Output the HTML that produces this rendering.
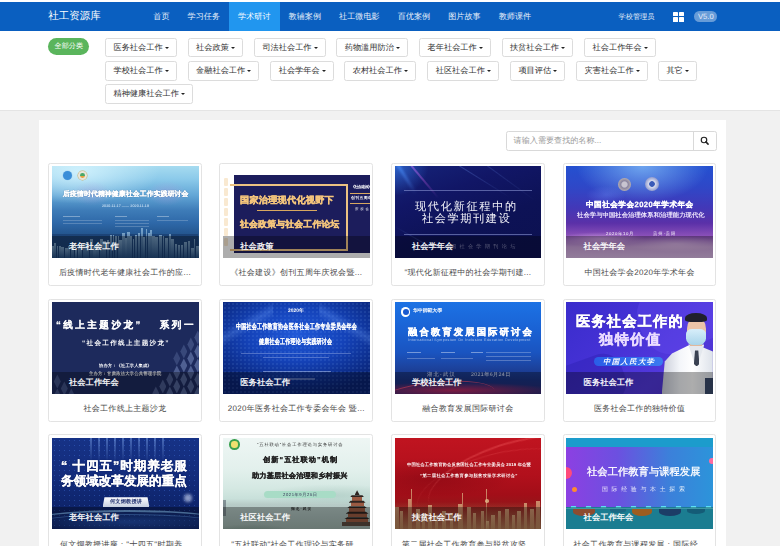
<!DOCTYPE html>
<html><head><meta charset="utf-8"><style>
*{margin:0;padding:0;box-sizing:border-box}
html,body{width:780px;height:546px;overflow:hidden;background:#f1f1f1;font-family:"Liberation Sans",sans-serif;position:relative;text-rendering:geometricPrecision}
.abs{position:absolute}
#top{position:absolute;left:0;top:0;width:780px;height:111px;background:#fff}
#nav{position:absolute;left:0;top:2px;width:780px;height:29px;background:#0a5fc0}
.brand{position:absolute;left:48.3px;top:0;height:29px;line-height:29px;font-size:10.5px;color:#fff;white-space:nowrap}
.ni{position:absolute;top:0;height:29px;line-height:29.8px;font-size:8.1px;color:#e8f0fa;white-space:nowrap;text-align:center}
.ni.act{background:#2196ef;color:#fff}
.pill{position:absolute;left:48.2px;top:37.6px;width:41.2px;height:17.6px;border-radius:9px;background:#5ab55c;color:#fff;font-size:7.1px;line-height:17.6px;text-align:center}
.fb{position:absolute;height:19.5px;border:1px solid #dcdcdc;border-radius:2.4px;background:#fff;color:#333;font-size:8.2px;line-height:18.2px;padding-left:7.4px;white-space:nowrap}
.car{display:inline-block;width:0;height:0;border-left:2.5px solid transparent;border-right:2.5px solid transparent;border-top:2.5px solid #222;vertical-align:middle;margin-left:2.1px;position:relative;top:0}
#line{position:absolute;left:0;top:110.4px;width:780px;height:1px;background:#e4e4e4}
#panel{position:absolute;left:39.2px;top:119.5px;width:686.6px;height:430px;background:#fff}
.search{position:absolute;left:505.8px;top:131px;width:210.8px;height:20.2px;border:1px solid #d9d9d9;border-radius:2.4px;background:#fff}
.search .ph{position:absolute;left:6.8px;top:0;line-height:18.4px;font-size:8.1px;color:#999;white-space:nowrap}
.search .sb{position:absolute;left:186.7px;top:0;width:23.1px;height:18.2px;border-left:1px solid #d9d9d9}
.card{position:absolute;width:153.9px;height:123.6px;border:1px solid #e3e3e3;border-radius:2.4px;background:#fff}
.img{position:absolute;left:2.8px;top:2.8px;width:146.8px;height:91.7px;overflow:hidden}
.cap{position:absolute;left:0;top:101.6px;width:151.9px;height:16px;line-height:16px;text-align:center;font-size:8px;letter-spacing:.3px;color:#4a4a4a;white-space:nowrap}
.ov{position:absolute;left:0;bottom:0;width:100%;height:22.5px;background:rgba(0,0,0,.32)}
.lab{position:absolute;left:17.2px;bottom:.7px;height:22.5px;line-height:22.5px;font-size:8.3px;color:#fff;white-space:nowrap;-webkit-text-stroke:.25px #fff}
</style></head>
<body>
<div id="top"></div>
<div id="nav">
<div class="brand">社工资源库</div>
<div class="ni" style="left:144.25px;width:34.30px">首页</div>
<div class="ni" style="left:178.55px;width:50.50px">学习任务</div>
<div class="ni act" style="left:229.05px;width:50.50px">学术研讨</div>
<div class="ni" style="left:279.55px;width:50.50px">教辅案例</div>
<div class="ni" style="left:330.05px;width:58.60px">社工微电影</div>
<div class="ni" style="left:388.65px;width:50.50px">百优案例</div>
<div class="ni" style="left:439.15px;width:50.50px">图片故事</div>
<div class="ni" style="left:489.65px;width:50.50px">教师课件</div>
<div class="ni" style="left:618.5px;font-size:7.2px">学校管理员</div>
<div class="abs" style="left:673px;top:9.7px;width:10.6px;height:10.2px"><div class="abs" style="left:0;top:0;width:4.8px;height:4.6px;background:#fff;border-radius:.6px"></div><div class="abs" style="left:5.8px;top:0;width:4.8px;height:4.6px;background:#fff;border-radius:.6px"></div><div class="abs" style="left:0;top:5.6px;width:4.8px;height:4.6px;background:#fff;border-radius:.6px"></div><div class="abs" style="left:5.8px;top:5.6px;width:4.8px;height:4.6px;background:#fff;border-radius:.6px"></div></div>
<div class="abs" style="left:694.3px;top:9px;width:23px;height:10.5px;border-radius:5.3px;background:rgba(255,255,255,.38);color:#e8eef8;font-size:7.6px;line-height:11.5px;text-align:center">V5.0</div>
</div>
<div class="pill">全部分类</div>
<div class="fb" style="left:105.1px;top:37.7px;width:71.5px">医务社会工作<span class="car"></span></div>
<div class="fb" style="left:187.7px;top:37.7px;width:55.3px">社会政策<span class="car"></span></div>
<div class="fb" style="left:254px;top:37.7px;width:71.5px">司法社会工作<span class="car"></span></div>
<div class="fb" style="left:336.3px;top:37.7px;width:71.5px">药物滥用防治<span class="car"></span></div>
<div class="fb" style="left:419.2px;top:37.7px;width:71.5px">老年社会工作<span class="car"></span></div>
<div class="fb" style="left:501.5px;top:37.7px;width:71.5px">扶贫社会工作<span class="car"></span></div>
<div class="fb" style="left:584.2px;top:37.7px;width:71.5px">社会工作年会<span class="car"></span></div>
<div class="fb" style="left:105.1px;top:61.3px;width:71.5px">学校社会工作<span class="car"></span></div>
<div class="fb" style="left:187.7px;top:61.3px;width:71.5px">金融社会工作<span class="car"></span></div>
<div class="fb" style="left:270.3px;top:61.3px;width:63.4px">社会学年会<span class="car"></span></div>
<div class="fb" style="left:344.3px;top:61.3px;width:71.5px">农村社会工作<span class="car"></span></div>
<div class="fb" style="left:427.3px;top:61.3px;width:71.5px">社区社会工作<span class="car"></span></div>
<div class="fb" style="left:510px;top:61.3px;width:55.3px">项目评估<span class="car"></span></div>
<div class="fb" style="left:576.2px;top:61.3px;width:71.5px">灾害社会工作<span class="car"></span></div>
<div class="fb" style="left:658px;top:61.3px;width:39.1px">其它<span class="car"></span></div>
<div class="fb" style="left:105.1px;top:84.4px;width:87.7px">精神健康社会工作<span class="car"></span></div>
<div id="line"></div>
<div id="panel"></div>
<div class="search"><div class="ph">请输入需要查找的名称...</div><div class="sb"><svg class="abs" style="left:3.9px;top:2.4px" width="12" height="12" viewBox="0 0 12 12"><circle cx="6" cy="6" r="2.75" fill="none" stroke="#222" stroke-width="1.15"></circle><line x1="7.9" y1="7.9" x2="10.1" y2="10.1" stroke="#222" stroke-width="1.5" stroke-linecap="round"></line></svg></div></div>
<div class="card" style="left:48.0px;top:162.7px"><div class="img" style="background:linear-gradient(#a8d8f0,#2a5a98 60%,#16406e)"><div class="abs" style="left:0.0px;top:0.0px;width:147.0px;height:92.0px;background:radial-gradient(ellipse 55% 35% at 18% 6%, rgba(215,245,255,.85), rgba(215,245,255,0) 100%), linear-gradient(180deg,#a6dbf0 0%,#8ccaea 14%,#62a6d6 32%,#3e7cb8 48%,#2e68a8 62%,#24568f 74%,#1a3f70 100%);"></div><div class="abs" style="left:95.0px;top:15.0px;width:40.0px;height:25.0px;background:radial-gradient(ellipse at center, rgba(180,150,220,.35), rgba(180,150,220,0) 70%);"></div><div class="abs" style="left:20.0px;top:15.0px;width:40.0px;height:25.0px;background:radial-gradient(ellipse at center, rgba(180,150,220,.3), rgba(180,150,220,0) 70%);"></div><div class="abs" style="left:11.4px;top:4.4px;width:9.2px;height:9.2px;border-radius:50%;background:#3a8ed8;box-shadow:0 0 0 .5px #a8d4f0"></div><div class="abs" style="left:26.4px;top:4.4px;width:9.2px;height:9.2px;border-radius:50%;background:#e8e6dc;box-shadow:0 0 0 .5px #c8b070"></div><div class="abs" style="left:28.6px;top:6.9px;width:4.8px;height:4.8px;border-radius:50%;background:linear-gradient(#4aa868 50%,#e8a040 50%);"></div><div class="abs" style="left: 11px; top: 23.7px; width: 502px; height: 30.4px; font-size: 27.6px; line-height: 30.4px; color: rgb(255, 255, 255); font-weight: bold; white-space: nowrap; transform: scale(0.25, 0.25); transform-origin: 0px 0px; -webkit-text-stroke: 1px rgb(255, 255, 255); text-shadow: rgba(10, 42, 90, 0.9) 0px 0px 4px; letter-spacing: 0.31px;">后疫情时代精神健康社会工作实践研讨会</div><div class="abs" style="left: 50px; top: 37.02px; width: 188px; height: 15.8px; font-size: 14.4px; line-height: 15.8px; color: rgb(232, 244, 255); white-space: nowrap; transform: scale(0.25, 0.25); transform-origin: 0px 0px; letter-spacing: 0.4px;">2020.11.17 —— 2020.11.19</div><div class="abs" style="left:11.0px;top:49.2px;width:17.0px;height:1.2px;background:rgba(255,255,255,.35);"></div><div class="abs" style="left:11.0px;top:53.5px;width:39.0px;height:1.0px;background:rgba(255,255,255,.2);"></div><div class="abs" style="left:11.0px;top:56.5px;width:39.0px;height:1.0px;background:rgba(255,255,255,.2);"></div><div class="abs" style="left:63.0px;top:49.2px;width:12.0px;height:1.2px;background:rgba(255,255,255,.35);"></div><div class="abs" style="left:63.0px;top:53.5px;width:34.0px;height:1.0px;background:rgba(255,255,255,.2);"></div><div class="abs" style="left:63.0px;top:56.5px;width:34.0px;height:1.0px;background:rgba(255,255,255,.2);"></div><div class="abs" style="left:63.0px;top:59.5px;width:34.0px;height:1.0px;background:rgba(255,255,255,.2);"></div><div class="abs" style="left:105.0px;top:49.2px;width:12.0px;height:1.2px;background:rgba(255,255,255,.35);"></div><div class="abs" style="left:105.0px;top:53.5px;width:31.0px;height:1.0px;background:rgba(255,255,255,.2);"></div><div class="abs" style="left:0.0px;top:68.0px;width:146.5px;height:23.5px;background:linear-gradient(180deg,#1c4478,#1a3d6e);"></div><div class="abs" style="left:0.0px;top:79.6px;width:2.0px;height:11.9px;background:linear-gradient(180deg,rgba(200,235,255,.5),rgba(100,170,220,.12));"></div><div class="abs" style="left:2.0px;top:76.3px;width:2.5px;height:15.2px;background:linear-gradient(180deg,rgba(200,235,255,.5),rgba(100,170,220,.12));"></div><div class="abs" style="left:5.0px;top:79.4px;width:1.5px;height:12.1px;background:linear-gradient(180deg,rgba(200,235,255,.5),rgba(100,170,220,.12));"></div><div class="abs" style="left:7.0px;top:80.0px;width:2.5px;height:11.5px;background:linear-gradient(180deg,rgba(200,235,255,.5),rgba(100,170,220,.12));"></div><div class="abs" style="left:9.5px;top:80.1px;width:3.0px;height:11.4px;background:linear-gradient(180deg,rgba(200,235,255,.5),rgba(100,170,220,.12));"></div><div class="abs" style="left:13.5px;top:81.5px;width:3.0px;height:10.0px;background:linear-gradient(180deg,rgba(200,235,255,.5),rgba(100,170,220,.12));"></div><div class="abs" style="left:16.5px;top:79.2px;width:2.0px;height:12.3px;background:linear-gradient(180deg,rgba(200,235,255,.5),rgba(100,170,220,.12));"></div><div class="abs" style="left:19.5px;top:78.1px;width:3.0px;height:13.4px;background:linear-gradient(180deg,rgba(200,235,255,.5),rgba(100,170,220,.12));"></div><div class="abs" style="left:23.5px;top:83.2px;width:1.5px;height:8.3px;background:linear-gradient(180deg,rgba(200,235,255,.5),rgba(100,170,220,.12));"></div><div class="abs" style="left:26.0px;top:81.3px;width:1.5px;height:10.2px;background:linear-gradient(180deg,rgba(200,235,255,.5),rgba(100,170,220,.12));"></div><div class="abs" style="left:27.5px;top:79.3px;width:2.5px;height:12.2px;background:linear-gradient(180deg,rgba(200,235,255,.5),rgba(100,170,220,.12));"></div><div class="abs" style="left:31.0px;top:76.2px;width:3.0px;height:15.3px;background:linear-gradient(180deg,rgba(200,235,255,.5),rgba(100,170,220,.12));"></div><div class="abs" style="left:34.5px;top:75.3px;width:3.0px;height:16.2px;background:linear-gradient(180deg,rgba(200,235,255,.5),rgba(100,170,220,.12));"></div><div class="abs" style="left:38.5px;top:72.2px;width:3.0px;height:19.3px;background:linear-gradient(180deg,rgba(200,235,255,.5),rgba(100,170,220,.12));"></div><div class="abs" style="left:41.5px;top:80.2px;width:2.5px;height:11.3px;background:linear-gradient(180deg,rgba(200,235,255,.5),rgba(100,170,220,.12));"></div><div class="abs" style="left:44.0px;top:78.5px;width:3.0px;height:13.0px;background:linear-gradient(180deg,rgba(200,235,255,.5),rgba(100,170,220,.12));"></div><div class="abs" style="left:48.0px;top:72.1px;width:3.0px;height:19.4px;background:linear-gradient(180deg,rgba(200,235,255,.5),rgba(100,170,220,.12));"></div><div class="abs" style="left:51.5px;top:74.1px;width:3.0px;height:17.4px;background:linear-gradient(180deg,rgba(200,235,255,.5),rgba(100,170,220,.12));"></div><div class="abs" style="left:55.0px;top:73.2px;width:2.5px;height:18.3px;background:linear-gradient(180deg,rgba(200,235,255,.5),rgba(100,170,220,.12));"></div><div class="abs" style="left:58.0px;top:68.9px;width:2.0px;height:22.6px;background:linear-gradient(180deg,rgba(200,235,255,.5),rgba(100,170,220,.12));"></div><div class="abs" style="left:61.0px;top:68.7px;width:1.5px;height:22.8px;background:linear-gradient(180deg,rgba(200,235,255,.5),rgba(100,170,220,.12));"></div><div class="abs" style="left:63.5px;top:69.8px;width:2.0px;height:21.7px;background:linear-gradient(180deg,rgba(200,235,255,.5),rgba(100,170,220,.12));"></div><div class="abs" style="left:66.0px;top:69.2px;width:1.5px;height:22.3px;background:linear-gradient(180deg,rgba(200,235,255,.5),rgba(100,170,220,.12));"></div><div class="abs" style="left:67.5px;top:73.2px;width:2.5px;height:18.3px;background:linear-gradient(180deg,rgba(200,235,255,.5),rgba(100,170,220,.12));"></div><div class="abs" style="left:70.0px;top:67.0px;width:3.0px;height:24.5px;background:linear-gradient(180deg,rgba(200,235,255,.5),rgba(100,170,220,.12));"></div><div class="abs" style="left:73.5px;top:71.4px;width:1.5px;height:20.1px;background:linear-gradient(180deg,rgba(200,235,255,.5),rgba(100,170,220,.12));"></div><div class="abs" style="left:75.0px;top:65.5px;width:3.0px;height:26.0px;background:linear-gradient(180deg,rgba(200,235,255,.5),rgba(100,170,220,.12));"></div><div class="abs" style="left:78.0px;top:69.6px;width:2.5px;height:21.9px;background:linear-gradient(180deg,rgba(200,235,255,.5),rgba(100,170,220,.12));"></div><div class="abs" style="left:81.0px;top:72.9px;width:1.5px;height:18.6px;background:linear-gradient(180deg,rgba(200,235,255,.5),rgba(100,170,220,.12));"></div><div class="abs" style="left:83.5px;top:69.0px;width:1.5px;height:22.5px;background:linear-gradient(180deg,rgba(200,235,255,.5),rgba(100,170,220,.12));"></div><div class="abs" style="left:86.0px;top:66.8px;width:2.5px;height:24.7px;background:linear-gradient(180deg,rgba(200,235,255,.5),rgba(100,170,220,.12));"></div><div class="abs" style="left:89.0px;top:61.7px;width:2.0px;height:29.8px;background:linear-gradient(180deg,rgba(200,235,255,.5),rgba(100,170,220,.12));"></div><div class="abs" style="left:91.5px;top:71.0px;width:1.5px;height:20.5px;background:linear-gradient(180deg,rgba(200,235,255,.5),rgba(100,170,220,.12));"></div><div class="abs" style="left:94.0px;top:62.8px;width:1.5px;height:28.7px;background:linear-gradient(180deg,rgba(200,235,255,.5),rgba(100,170,220,.12));"></div><div class="abs" style="left:96.0px;top:66.6px;width:2.5px;height:24.9px;background:linear-gradient(180deg,rgba(200,235,255,.5),rgba(100,170,220,.12));"></div><div class="abs" style="left:98.5px;top:63.4px;width:1.5px;height:28.1px;background:linear-gradient(180deg,rgba(200,235,255,.5),rgba(100,170,220,.12));"></div><div class="abs" style="left:100.5px;top:70.0px;width:2.5px;height:21.5px;background:linear-gradient(180deg,rgba(200,235,255,.5),rgba(100,170,220,.12));"></div><div class="abs" style="left:103.0px;top:70.3px;width:3.0px;height:21.2px;background:linear-gradient(180deg,rgba(200,235,255,.5),rgba(100,170,220,.12));"></div><div class="abs" style="left:107.0px;top:68.5px;width:3.0px;height:23.0px;background:linear-gradient(180deg,rgba(200,235,255,.5),rgba(100,170,220,.12));"></div><div class="abs" style="left:111.0px;top:69.5px;width:1.5px;height:22.0px;background:linear-gradient(180deg,rgba(200,235,255,.5),rgba(100,170,220,.12));"></div><div class="abs" style="left:113.5px;top:71.9px;width:2.5px;height:19.6px;background:linear-gradient(180deg,rgba(200,235,255,.5),rgba(100,170,220,.12));"></div><div class="abs" style="left:117.0px;top:67.5px;width:2.0px;height:24.0px;background:linear-gradient(180deg,rgba(200,235,255,.5),rgba(100,170,220,.12));"></div><div class="abs" style="left:119.5px;top:72.2px;width:2.5px;height:19.3px;background:linear-gradient(180deg,rgba(200,235,255,.5),rgba(100,170,220,.12));"></div><div class="abs" style="left:123.0px;top:78.0px;width:2.5px;height:13.5px;background:linear-gradient(180deg,rgba(200,235,255,.5),rgba(100,170,220,.12));"></div><div class="abs" style="left:126.0px;top:78.5px;width:2.5px;height:13.0px;background:linear-gradient(180deg,rgba(200,235,255,.5),rgba(100,170,220,.12));"></div><div class="abs" style="left:129.5px;top:78.8px;width:2.0px;height:12.7px;background:linear-gradient(180deg,rgba(200,235,255,.5),rgba(100,170,220,.12));"></div><div class="abs" style="left:132.5px;top:75.3px;width:2.5px;height:16.2px;background:linear-gradient(180deg,rgba(200,235,255,.5),rgba(100,170,220,.12));"></div><div class="abs" style="left:136.0px;top:74.6px;width:2.5px;height:16.9px;background:linear-gradient(180deg,rgba(200,235,255,.5),rgba(100,170,220,.12));"></div><div class="abs" style="left:139.0px;top:81.1px;width:3.0px;height:10.4px;background:linear-gradient(180deg,rgba(200,235,255,.5),rgba(100,170,220,.12));"></div><div class="abs" style="left:142.0px;top:72.3px;width:1.5px;height:19.2px;background:linear-gradient(180deg,rgba(200,235,255,.5),rgba(100,170,220,.12));"></div><div class="abs" style="left:144.0px;top:79.3px;width:3.0px;height:12.2px;background:linear-gradient(180deg,rgba(200,235,255,.5),rgba(100,170,220,.12));"></div><div class="ov"></div><div class="lab">老年社会工作</div></div><div class="cap">后疫情时代老年健康社会工作的应...</div></div>
<div class="card" style="left:219.3px;top:162.7px"><div class="img" style="background:#fff"><div class="abs" style="left:10.8px;top:8.1px;width:136.0px;height:80.5px;background:#1c1d5c;"></div><div class="abs" style="left:6.5px;top:17.5px;width:118.1px;height:67.5px;background:transparent;border:2.2px solid #ecc282;border-left:none;"></div><div class="abs" style="left:1.0px;top:12.0px;width:4.4px;height:7.5px;background:rgba(240,200,140,.4);border-radius:1px;"></div><div class="abs" style="left:1.0px;top:22.0px;width:4.4px;height:7.5px;background:rgba(240,200,140,.4);border-radius:1px;"></div><div class="abs" style="left:1.0px;top:32.0px;width:4.4px;height:7.5px;background:rgba(240,200,140,.4);border-radius:1px;"></div><div class="abs" style="left:1.0px;top:42.0px;width:4.4px;height:7.5px;background:rgba(240,200,140,.4);border-radius:1px;"></div><div class="abs" style="left:1.0px;top:52.0px;width:4.4px;height:7.5px;background:rgba(240,200,140,.4);border-radius:1px;"></div><div class="abs" style="left:1.0px;top:62.0px;width:4.4px;height:7.5px;background:rgba(240,200,140,.4);border-radius:1px;"></div><div class="abs" style="left:1.0px;top:72.0px;width:4.4px;height:7.5px;background:rgba(240,200,140,.4);border-radius:1px;"></div><div class="abs" style="left: 17.4px; top: 28.6px; width: 374.4px; height: 40px; font-size: 36.4px; line-height: 40px; color: rgb(244, 197, 124); font-weight: bold; white-space: nowrap; transform: scale(0.25, 0.25); transform-origin: 0px 0px; -webkit-text-stroke: 2px rgb(244, 197, 124); letter-spacing: 1.21px;">国家治理现代化视野下</div><div class="abs" style="left:34.0px;top:43.8px;width:60.4px;height:0.8px;background:#d8a860;"></div><div class="abs" style="left: 17.4px; top: 52.16px; width: 397.6px; height: 38.7px; font-size: 35.2px; line-height: 38.7px; color: rgb(244, 197, 124); font-weight: bold; white-space: nowrap; transform: scale(0.25, 0.25); transform-origin: 0px 0px; -webkit-text-stroke: 2px rgb(244, 197, 124); letter-spacing: 1.01px;">社会政策与社会工作论坛</div><div class="abs" style="left: 128px; top: 18.86px; width: 84px; height: 17.2px; font-size: 15.6px; line-height: 17.2px; color: rgb(255, 255, 255); font-weight: bold; white-space: nowrap; transform: scale(0.25, 0.25); transform-origin: 0px 0px; letter-spacing: -1.91px;">《社会建设》</div><div class="abs" style="left:127.0px;top:26.5px;width:19.5px;height:0.7px;background:#d8a860;"></div><div class="abs" style="left: 128px; top: 29.86px; width: 84px; height: 17.2px; font-size: 15.6px; line-height: 17.2px; color: rgb(255, 255, 255); font-weight: bold; white-space: nowrap; transform: scale(0.25, 0.25); transform-origin: 0px 0px; letter-spacing: 1.51px;">创刊五周年</div><div class="abs" style="left:127.0px;top:37.0px;width:19.5px;height:0.7px;background:#d8a860;"></div><div class="abs" style="left: 132px; top: 40.13px; width: 56px; height: 15px; font-size: 13.6px; line-height: 15px; color: rgb(255, 255, 255); white-space: nowrap; transform: scale(0.25, 0.25); transform-origin: 0px 0px; letter-spacing: 7.61px;">庆祝会</div><div class="abs" style="left:0.0px;top:86.5px;width:146.5px;height:5.0px;background:#fff;"></div><div class="ov"></div><div class="lab">社会政策</div></div><div class="cap">《社会建设》创刊五周年庆祝会暨...</div></div>
<div class="card" style="left:390.9px;top:162.7px"><div class="img" style="background:#12186a"><div class="abs" style="left:0.0px;top:0.0px;width:147.0px;height:92.0px;background:linear-gradient(160deg,#16247a 0%,#111666 30%,#0d1256 60%,#0c1150 100%);"></div><div class="abs" style="left:4.0px;top:-2.0px;width:34.0px;height:3.0px;background:linear-gradient(90deg,rgba(90,150,255,.7),rgba(90,150,255,0));transform:rotate(58deg);transform-origin:0 0;filter:blur(.8px);"></div><div class="abs" style="left:17.0px;top:-1.0px;width:42.0px;height:1.5px;background:linear-gradient(90deg,rgba(210,90,230,.6),rgba(210,90,230,0));transform:rotate(50deg);transform-origin:0 0;filter:blur(.4px);"></div><div class="abs" style="left:64.0px;top:-1.0px;width:60.0px;height:1.2px;background:linear-gradient(90deg,rgba(120,160,255,.3),rgba(120,160,255,0));transform:rotate(32deg);transform-origin:0 0;filter:blur(.4px);"></div><div class="abs" style="left:92.0px;top:-1.0px;width:60.0px;height:1.2px;background:linear-gradient(90deg,rgba(120,160,255,.2),rgba(120,160,255,0));transform:rotate(36deg);transform-origin:0 0;filter:blur(.4px);"></div><div class="abs" style="left:0.0px;top:60.0px;width:40.0px;height:1.2px;background:linear-gradient(90deg,rgba(120,160,255,0),rgba(120,160,255,.3));transform:rotate(30deg);transform-origin:0 0;filter:blur(.4px);"></div><div class="abs" style="left:0.0px;top:0.0px;width:34.0px;height:30.0px;background:radial-gradient(ellipse at 0 0, rgba(60,140,255,.6), rgba(60,140,255,0) 70%);"></div><div class="abs" style="left:9.0px;top:23.6px;width:128.7px;height:0.7px;background:rgba(150,160,220,.55);"></div><div class="abs" style="left:9.0px;top:67.5px;width:128.7px;height:0.7px;background:rgba(150,160,220,.55);"></div><div class="abs" style="left: 20.7px; top: 33.24px; width: 405.6px; height: 49.3px; font-size: 44.8px; line-height: 49.3px; color: rgb(244, 244, 250); white-space: nowrap; transform: scale(0.25, 0.25); transform-origin: 0px 0px; letter-spacing: 6.7px;">现代化新征程中的</div><div class="abs" style="left: 27.5px; top: 45.94px; width: 351.2px; height: 49.3px; font-size: 44.8px; line-height: 49.3px; color: rgb(244, 244, 250); white-space: nowrap; transform: scale(0.25, 0.25); transform-origin: 0px 0px; letter-spacing: 6.3px;">社会学期刊建设</div><div class="abs" style="left: 56.8px; top: 77.54px; width: 257.2px; height: 22.9px; font-size: 20.8px; line-height: 22.9px; color: rgba(210, 210, 240, 0.6); white-space: nowrap; transform: scale(0.25, 0.25); transform-origin: 0px 0px; letter-spacing: 12.99px;">国社会学期刊论坛</div><div class="ov"></div><div class="lab">社会学年会</div></div><div class="cap">"现代化新征程中的社会学期刊建...</div></div>
<div class="card" style="left:562.6px;top:162.7px"><div class="img" style="background:linear-gradient(#2a58d8,#5a2aa8 60%,#9a4aa8)"><div class="abs" style="left:0.0px;top:0.0px;width:147.0px;height:92.0px;background:linear-gradient(180deg,#2450d0 0%,#2e48c8 22%,#4238b8 45%,#5a30a8 62%,#8a50b8 76%,#c8a0d8 88%,#d8b8e4 100%);"></div><div class="abs" style="left:0.0px;top:0.0px;width:146.5px;height:40.0px;background:radial-gradient(ellipse 45% 90% at 52% 0%, rgba(150,210,255,.65), rgba(150,210,255,0) 100%);"></div><div class="abs" style="left:-10.0px;top:66.0px;width:90.0px;height:14.0px;background:radial-gradient(ellipse at center, rgba(255,220,255,.45), rgba(255,220,255,0) 70%);"></div><div class="abs" style="left:60.0px;top:70.0px;width:100.0px;height:16.0px;background:radial-gradient(ellipse at center, rgba(255,230,255,.4), rgba(255,230,255,0) 70%);"></div><div class="abs" style="left:20.0px;top:20.0px;width:40.0px;height:18.0px;background:radial-gradient(ellipse at center, rgba(120,160,255,.3), rgba(120,160,255,0) 70%);"></div><div class="abs" style="left:51.4px;top:11.4px;width:13.2px;height:13.2px;border-radius:50%;background:radial-gradient(#c8c4d0 0 28%,#8a84a0 40%,#b8b0b0 72%);"></div><div class="abs" style="left:78.3px;top:11.0px;width:14.0px;height:14.0px;border-radius:50%;background:radial-gradient(#3a5ab8 0 25%,#d8dcf0 32%,#8a94c8 75%);"></div><div class="abs" style="left: 20px; top: 33.32px; width: 428.8px; height: 33.4px; font-size: 30.4px; line-height: 33.4px; color: rgb(255, 255, 255); font-weight: bold; white-space: nowrap; transform: scale(0.25, 0.25); transform-origin: 0px 0px; -webkit-text-stroke: 1px rgb(255, 255, 255); letter-spacing: 1.91px;">中国社会学会2020年学术年会</div><div class="abs" style="left: 10.3px; top: 45.33px; width: 510.8px; height: 27.7px; font-size: 25.2px; line-height: 27.7px; color: rgb(244, 236, 255); font-weight: bold; white-space: nowrap; transform: scale(0.25, 0.25); transform-origin: 0px 0px; letter-spacing: 0.36px;">社会学与中国社会治理体系和治理能力现代化</div><div class="abs" style="left: 39.5px; top: 64.34px; width: 109.2px; height: 18.9px; font-size: 17.2px; line-height: 18.9px; color: rgb(255, 255, 255); white-space: nowrap; transform: scale(0.25, 0.25); transform-origin: 0px 0px; letter-spacing: 2.52px;">2020年10月</div><div class="abs" style="left: 86.3px; top: 64.34px; width: 89.6px; height: 18.9px; font-size: 17.2px; line-height: 18.9px; color: rgb(255, 255, 255); white-space: nowrap; transform: scale(0.25, 0.25); transform-origin: 0px 0px; letter-spacing: 3.69px;">贵州·贵阳</div><div class="ov"></div><div class="lab">社会学年会</div></div><div class="cap">中国社会学会2020年学术年会</div></div>
<div class="card" style="left:48.0px;top:298.7px"><div class="img" style="background:#1c2a5a"><div class="abs" style="left:0.0px;top:0.0px;width:147.0px;height:92.0px;background:#1d2a5c;"></div><div class="abs" style="left:142.5px;top:84.0px;width:7.0px;height:14.0px;background:rgba(130,150,200,0.5);clip-path:polygon(50% 0,100% 50%,50% 100%,0 50%);"></div><div class="abs" style="left:142.5px;top:70.0px;width:7.0px;height:14.0px;background:rgba(130,150,200,0.5);clip-path:polygon(50% 0,100% 50%,50% 100%,0 50%);"></div><div class="abs" style="left:142.5px;top:56.0px;width:7.0px;height:14.0px;background:rgba(130,150,200,0.5);clip-path:polygon(50% 0,100% 50%,50% 100%,0 50%);"></div><div class="abs" style="left:142.5px;top:42.0px;width:7.0px;height:14.0px;background:rgba(130,150,200,0.5);clip-path:polygon(50% 0,100% 50%,50% 100%,0 50%);"></div><div class="abs" style="left:142.5px;top:28.0px;width:7.0px;height:14.0px;background:rgba(130,150,200,0.33);clip-path:polygon(50% 0,100% 50%,50% 100%,0 50%);"></div><div class="abs" style="left:135.5px;top:77.0px;width:7.0px;height:14.0px;background:rgba(130,150,200,0.5);clip-path:polygon(50% 0,100% 50%,50% 100%,0 50%);"></div><div class="abs" style="left:135.5px;top:63.0px;width:7.0px;height:14.0px;background:rgba(130,150,200,0.5);clip-path:polygon(50% 0,100% 50%,50% 100%,0 50%);"></div><div class="abs" style="left:135.5px;top:49.0px;width:7.0px;height:14.0px;background:rgba(130,150,200,0.5);clip-path:polygon(50% 0,100% 50%,50% 100%,0 50%);"></div><div class="abs" style="left:135.5px;top:35.0px;width:7.0px;height:14.0px;background:rgba(130,150,200,0.3);clip-path:polygon(50% 0,100% 50%,50% 100%,0 50%);"></div><div class="abs" style="left:128.5px;top:84.0px;width:7.0px;height:14.0px;background:rgba(130,150,200,0.5);clip-path:polygon(50% 0,100% 50%,50% 100%,0 50%);"></div><div class="abs" style="left:128.5px;top:70.0px;width:7.0px;height:14.0px;background:rgba(130,150,200,0.5);clip-path:polygon(50% 0,100% 50%,50% 100%,0 50%);"></div><div class="abs" style="left:128.5px;top:56.0px;width:7.0px;height:14.0px;background:rgba(130,150,200,0.5);clip-path:polygon(50% 0,100% 50%,50% 100%,0 50%);"></div><div class="abs" style="left:128.5px;top:42.0px;width:7.0px;height:14.0px;background:rgba(130,150,200,0.28);clip-path:polygon(50% 0,100% 50%,50% 100%,0 50%);"></div><div class="abs" style="left:121.5px;top:77.0px;width:7.0px;height:14.0px;background:rgba(130,150,200,0.5);clip-path:polygon(50% 0,100% 50%,50% 100%,0 50%);"></div><div class="abs" style="left:121.5px;top:63.0px;width:7.0px;height:14.0px;background:rgba(130,150,200,0.48);clip-path:polygon(50% 0,100% 50%,50% 100%,0 50%);"></div><div class="abs" style="left:121.5px;top:49.0px;width:7.0px;height:14.0px;background:rgba(130,150,200,0.26);clip-path:polygon(50% 0,100% 50%,50% 100%,0 50%);"></div><div class="abs" style="left:114.5px;top:84.0px;width:7.0px;height:14.0px;background:rgba(130,150,200,0.5);clip-path:polygon(50% 0,100% 50%,50% 100%,0 50%);"></div><div class="abs" style="left:114.5px;top:70.0px;width:7.0px;height:14.0px;background:rgba(130,150,200,0.46);clip-path:polygon(50% 0,100% 50%,50% 100%,0 50%);"></div><div class="abs" style="left:107.5px;top:77.0px;width:7.0px;height:14.0px;background:rgba(130,150,200,0.43);clip-path:polygon(50% 0,100% 50%,50% 100%,0 50%);"></div><div class="abs" style="left:100.5px;top:84.0px;width:7.0px;height:14.0px;background:rgba(130,150,200,0.41);clip-path:polygon(50% 0,100% 50%,50% 100%,0 50%);"></div><div class="abs" style="left:2.0px;top:72.0px;width:7.0px;height:14.0px;background:rgba(130,150,200,.35);clip-path:polygon(50% 0,100% 50%,50% 100%,0 50%);"></div><div class="abs" style="left:9.0px;top:79.0px;width:7.0px;height:14.0px;background:rgba(130,150,200,.35);clip-path:polygon(50% 0,100% 50%,50% 100%,0 50%);"></div><div class="abs" style="left:2.0px;top:86.0px;width:7.0px;height:14.0px;background:rgba(130,150,200,.35);clip-path:polygon(50% 0,100% 50%,50% 100%,0 50%);"></div><div class="abs" style="left:16.0px;top:86.0px;width:7.0px;height:14.0px;background:rgba(130,150,200,.35);clip-path:polygon(50% 0,100% 50%,50% 100%,0 50%);"></div><div class="abs" style="left: 4px; top: 17.72px; width: 550px; height: 42.2px; font-size: 38.4px; line-height: 42.2px; color: rgb(255, 255, 255); font-weight: bold; white-space: nowrap; transform: scale(0.25, 0.25); transform-origin: 0px 0px; -webkit-text-stroke: 1px rgb(255, 255, 255); letter-spacing: 9.75px;">“线上主题沙龙”　 系列一</div><div class="abs" style="left: 30.4px; top: 36.47px; width: 346.8px; height: 29px; font-size: 26.4px; line-height: 29px; color: rgb(255, 255, 255); font-weight: bold; white-space: nowrap; transform: scale(0.25, 0.25); transform-origin: 0px 0px; letter-spacing: 5.12px;">“社会工作线上主题沙龙”</div><div class="abs" style="left: 46.9px; top: 60.53px; width: 210.8px; height: 18.9px; font-size: 17.2px; line-height: 18.9px; color: rgb(255, 255, 255); font-weight: bold; white-space: nowrap; transform: scale(0.25, 0.25); transform-origin: 0px 0px; letter-spacing: 0.4px;">协办方：《社工学人集成》</div><div class="abs" style="left: 37.2px; top: 68.34px; width: 288.4px; height: 18.9px; font-size: 17.2px; line-height: 18.9px; color: rgb(255, 255, 255); font-weight: bold; white-space: nowrap; transform: scale(0.25, 0.25); transform-origin: 0px 0px; letter-spacing: 0.92px;">主办方：甘肃政法大学公共管理学院</div><div class="ov"></div><div class="lab">社会工作年会</div></div><div class="cap">社会工作线上主题沙龙</div></div>
<div class="card" style="left:219.3px;top:298.7px"><div class="img" style="background:#0a3aa0"><div class="abs" style="left:0.0px;top:0.0px;width:147.0px;height:92.0px;background:radial-gradient(ellipse 75% 65% at 50% 35%, #2058d8 0%, #1442b8 45%, #0c2c88 80%, #0a2270 100%);"></div><div class="abs" style="left:0.0px;top:0.0px;width:147.0px;height:92.0px;background:radial-gradient(circle, rgba(140,190,255,.35) 0 .5px, transparent .8px) 0 0/4px 4px;"></div><div class="abs" style="left:-10.0px;top:0.0px;width:60.0px;height:50.0px;background:linear-gradient(150deg, rgba(120,170,255,.0) 40%, rgba(120,170,255,.25) 50%, rgba(120,170,255,0) 60%);"></div><div class="abs" style="left:96.0px;top:0.0px;width:60.0px;height:50.0px;background:linear-gradient(210deg, rgba(120,170,255,.0) 40%, rgba(120,170,255,.25) 50%, rgba(120,170,255,0) 60%);"></div><div class="abs" style="left: 64.5px; top: 5.61px; width: 64px; height: 21.6px; font-size: 19.6px; line-height: 21.6px; color: rgb(255, 255, 255); font-weight: bold; white-space: nowrap; transform: scale(0.25, 0.25); transform-origin: 0px 0px; letter-spacing: 0.2px;">2020年</div><div class="abs" style="left: 12.6px; top: 19.22px; width: 732.1px; height: 33.4px; font-size: 30.4px; line-height: 33.4px; color: rgb(255, 255, 255); font-weight: bold; white-space: nowrap; transform: scale(0.165, 0.25); transform-origin: 0px 0px; -webkit-text-stroke: 0.5px rgb(255, 255, 255); letter-spacing: 1.51px;">中国社会工作教育协会医务社会工作专业委员会年会</div><div class="abs" style="left: 36.3px; top: 35.43px; width: 430.6px; height: 32.6px; font-size: 29.6px; line-height: 32.6px; color: rgb(255, 255, 255); font-weight: bold; white-space: nowrap; transform: scale(0.17, 0.25); transform-origin: 0px 0px; -webkit-text-stroke: 0.5px rgb(255, 255, 255); letter-spacing: 1.22px;">健康社会工作理论与实践研讨会</div><div class="abs" style="left:18.0px;top:50.8px;width:110.0px;height:1.0px;background:rgba(220,230,255,.3);"></div><div class="abs" style="left:40.0px;top:54.8px;width:66.0px;height:1.0px;background:rgba(220,230,255,.3);"></div><div class="abs" style="left:40.0px;top:68.5px;width:68.0px;height:1.2px;background:rgba(230,240,255,.4);"></div><div class="abs" style="left:58.0px;top:76.0px;width:34.0px;height:1.2px;background:rgba(230,240,255,.3);"></div><div class="ov"></div><div class="lab">医务社会工作</div></div><div class="cap">2020年医务社会工作专委会年会 暨...</div></div>
<div class="card" style="left:390.9px;top:298.7px"><div class="img" style="background:#1a6ad0"><div class="abs" style="left:0.0px;top:0.0px;width:147.0px;height:92.0px;background:linear-gradient(180deg,#1c72e4 0%,#1a62d4 30%,#1a54c0 55%,#1c44a0 70%,#1a3280 85%,#2a2a70 100%);"></div><div class="abs" style="left:6.2px;top:4.5px;width:9.6px;height:9.6px;border-radius:50%;background:#fff;"></div><div class="abs" style="left:8.0px;top:6.3px;width:6.0px;height:6.0px;border-radius:50%;background:#1a5ad0;"></div><div class="abs" style="left: 18.8px; top: 5.55px; width: 116.8px; height: 22px; font-size: 20px; line-height: 22px; color: rgb(255, 255, 255); font-weight: bold; white-space: nowrap; transform: scale(0.25, 0.25); transform-origin: 0px 0px; font-family: &quot;Liberation Serif&quot;, serif; letter-spacing: -0.68px;">华中師範大學</div><div class="abs" style="left: 12.9px; top: 24.63px; width: 495.2px; height: 41.4px; font-size: 37.6px; line-height: 41.4px; color: rgb(255, 255, 255); font-weight: bold; white-space: nowrap; transform: scale(0.25, 0.25); transform-origin: 0px 0px; -webkit-text-stroke: 1.5px rgb(255, 255, 255); letter-spacing: 8.2px;">融合教育发展国际研讨会</div><div class="abs" style="left: 12.9px; top: 35.62px; width: 488.4px; height: 15.8px; font-size: 14.4px; line-height: 15.8px; color: rgba(255, 255, 255, 0.6); white-space: nowrap; transform: scale(0.25, 0.25); transform-origin: 0px 0px; letter-spacing: 1.59px;">International Symposium On Inclusive Education Development</div><div class="abs" style="left:12.0px;top:49.3px;width:14.0px;height:1.2px;background:rgba(255,255,255,.4);"></div><div class="abs" style="left:12.0px;top:55.5px;width:28.0px;height:1.0px;background:rgba(255,255,255,.25);"></div><div class="abs" style="left:46.0px;top:49.3px;width:14.0px;height:1.2px;background:rgba(255,255,255,.4);"></div><div class="abs" style="left:46.0px;top:55.5px;width:32.0px;height:1.0px;background:rgba(255,255,255,.25);"></div><div class="abs" style="left:76.0px;top:49.3px;width:12.0px;height:1.2px;background:rgba(255,255,255,.4);"></div><div class="abs" style="left:91.0px;top:49.3px;width:45.0px;height:1.0px;background:rgba(255,255,255,.25);"></div><div class="abs" style="left:91.0px;top:53.3px;width:45.0px;height:1.0px;background:rgba(255,255,255,.25);"></div><div class="abs" style="left:91.0px;top:57.3px;width:45.0px;height:1.0px;background:rgba(255,255,255,.25);"></div><div class="abs" style="left: 32.4px; top: 69.84px; width: 110.4px; height: 22.9px; font-size: 20.8px; line-height: 22.9px; color: rgb(221, 230, 255); white-space: nowrap; transform: scale(0.25, 0.25); transform-origin: 0px 0px; letter-spacing: 5.15px;">湖北·武汉</div><div class="abs" style="left: 76px; top: 69.84px; width: 157.2px; height: 22.9px; font-size: 20.8px; line-height: 22.9px; color: rgb(221, 230, 255); white-space: nowrap; transform: scale(0.25, 0.25); transform-origin: 0px 0px; letter-spacing: 1.56px;">2021年6月24日</div><div class="abs" style="left:-10.0px;top:78.0px;width:170.0px;height:16.0px;background:radial-gradient(ellipse 60% 50% at 40% 65%, rgba(230,40,90,.75), rgba(230,40,90,0) 100%);"></div><div class="abs" style="left:-20.0px;top:80.0px;width:120.0px;height:30.0px;background:transparent;border-radius:50%;border-top:1.2px solid rgba(255,80,120,.7);transform:rotate(-6deg);"></div><div class="ov"></div><div class="lab">学校社会工作</div></div><div class="cap">融合教育发展国际研讨会</div></div>
<div class="card" style="left:562.6px;top:298.7px"><div class="img" style="background:#4a2ad0"><div class="abs" style="left:0.0px;top:0.0px;width:147.0px;height:92.0px;background:linear-gradient(135deg,#3a2ccc 0%,#4632d6 40%,#5238dc 70%,#4a30c8 100%);"></div><div class="abs" style="left:70.0px;top:-30.0px;width:120.0px;height:70.0px;background:rgba(120,90,255,.22);transform:rotate(-25deg);border-radius:30px;"></div><div class="abs" style="left:-30.0px;top:60.0px;width:90.0px;height:50.0px;background:rgba(40,30,170,.35);transform:rotate(-20deg);border-radius:20px;"></div><div class="abs" style="left: 9.4px; top: 11.49px; width: 426.4px; height: 62.5px; font-size: 56.8px; line-height: 62.5px; color: rgb(255, 255, 255); font-weight: bold; white-space: nowrap; transform: scale(0.25, 0.25); transform-origin: 0px 0px; -webkit-text-stroke: 2px rgb(255, 255, 255); text-shadow: rgba(40, 20, 120, 0.6) 0px 0px 6px; letter-spacing: 4.86px;">医务社会工作的</div><div class="abs" style="left: 32.2px; top: 29.29px; width: 244.8px; height: 62.5px; font-size: 56.8px; line-height: 62.5px; color: rgb(234, 220, 255); font-weight: bold; white-space: nowrap; transform: scale(0.25, 0.25); transform-origin: 0px 0px; -webkit-text-stroke: 2px rgb(234, 220, 255); letter-spacing: 5.81px;">独特价值</div><div class="abs" style="left:27.2px;top:54.9px;width:69.1px;height:8.8px;background:linear-gradient(90deg,#2a5ee8,#3a7af0);border-radius:4.4px;"></div><div class="abs" style="left: 37px; top: 55.23px; width: 204px; height: 32.6px; font-size: 29.6px; line-height: 32.6px; color: rgb(255, 255, 255); font-weight: bold; white-space: nowrap; transform: scale(0.25, 0.25); transform-origin: 0px 0px; font-style: italic; letter-spacing: 5.29px;">中国人民大学</div><div class="abs" style="left:95.3px;top:42.0px;width:51.2px;height:50.0px;background:linear-gradient(90deg,#c8ccd8,#f4f6fa 35%,#ffffff 60%,#dde2ea);clip-path:polygon(0 100%,6% 34%,20% 18%,52% 2%,72% 2%,100% 14%,100% 100%);"></div><div class="abs" style="left:122.0px;top:42.0px;width:16.0px;height:20.0px;background:#e4e8ee;clip-path:polygon(0 0,100% 0,60% 100%,40% 100%);"></div><div class="abs" style="left:127.5px;top:48.0px;width:5.5px;height:16.0px;background:#3a4252;clip-path:polygon(20% 0,80% 0,100% 85%,50% 100%,0 85%);"></div><div class="abs" style="left:124.0px;top:34.0px;width:12.0px;height:10.0px;background:#e0b89c;"></div><div class="abs" style="left:120.5px;top:15.0px;width:19.0px;height:26.0px;background:#ecc4a8;border-radius:45% 45% 40% 40%;"></div><div class="abs" style="left:119.0px;top:10.5px;width:22.0px;height:9.5px;background:#20202c;border-radius:50% 50% 25% 25%;"></div><div class="abs" style="left:119.5px;top:27.0px;width:20.5px;height:16.0px;background:linear-gradient(#d8eefa,#a8d4ea);border-radius:30% 30% 40% 40%;"></div><div class="abs" style="left:139.0px;top:76.0px;width:8.0px;height:16.0px;background:#3a4a6a;"></div><div class="ov"></div><div class="lab">医务社会工作</div></div><div class="cap">医务社会工作的独特价值</div></div>
<div class="card" style="left:48.0px;top:434.0px"><div class="img" style="background:#1a3a9a"><div class="abs" style="left:0.0px;top:0.0px;width:147.0px;height:92.0px;background:linear-gradient(180deg,#163286 0%,#132c7c 40%,#0f2670 65%,#0c1f60 100%);"></div><div class="abs" style="left:0.0px;top:0.0px;width:147.0px;height:92.0px;background:radial-gradient(circle, rgba(80,140,255,.3) 0 .6px, transparent .9px) 0 0/5px 5px;"></div><div class="abs" style="left:38.0px;top:0.0px;width:2.0px;height:24.0px;background:linear-gradient(rgba(150,190,255,.4),rgba(150,190,255,0));filter:blur(.6px);"></div><div class="abs" style="left:46.0px;top:0.0px;width:2.0px;height:24.0px;background:linear-gradient(rgba(150,190,255,.4),rgba(150,190,255,0));filter:blur(.6px);"></div><div class="abs" style="left:54.0px;top:0.0px;width:2.0px;height:24.0px;background:linear-gradient(rgba(150,190,255,.4),rgba(150,190,255,0));filter:blur(.6px);"></div><div class="abs" style="left:62.0px;top:0.0px;width:2.0px;height:24.0px;background:linear-gradient(rgba(150,190,255,.4),rgba(150,190,255,0));filter:blur(.6px);"></div><div class="abs" style="left:70.0px;top:0.0px;width:2.0px;height:24.0px;background:linear-gradient(rgba(150,190,255,.4),rgba(150,190,255,0));filter:blur(.6px);"></div><div class="abs" style="left:78.0px;top:0.0px;width:2.0px;height:24.0px;background:linear-gradient(rgba(150,190,255,.4),rgba(150,190,255,0));filter:blur(.6px);"></div><div class="abs" style="left:86.0px;top:0.0px;width:2.0px;height:24.0px;background:linear-gradient(rgba(150,190,255,.4),rgba(150,190,255,0));filter:blur(.6px);"></div><div class="abs" style="left:94.0px;top:0.0px;width:2.0px;height:24.0px;background:linear-gradient(rgba(150,190,255,.4),rgba(150,190,255,0));filter:blur(.6px);"></div><div class="abs" style="left:102.0px;top:0.0px;width:2.0px;height:24.0px;background:linear-gradient(rgba(150,190,255,.4),rgba(150,190,255,0));filter:blur(.6px);"></div><div class="abs" style="left:110.0px;top:0.0px;width:2.0px;height:24.0px;background:linear-gradient(rgba(150,190,255,.4),rgba(150,190,255,0));filter:blur(.6px);"></div><div class="abs" style="left: 8.9px; top: 21.37px; width: 503.2px; height: 55.4px; font-size: 50.4px; line-height: 55.4px; color: rgb(255, 255, 255); font-weight: bold; white-space: nowrap; transform: scale(0.25, 0.25); transform-origin: 0px 0px; -webkit-text-stroke: 1.5px rgb(255, 255, 255); text-shadow: rgba(0, 0, 40, 0.6) 0px 0px 6px; letter-spacing: 3.58px;">“ 十四五”时期养老服</div><div class="abs" style="left: 8.9px; top: 35.97px; width: 503.2px; height: 55.4px; font-size: 50.4px; line-height: 55.4px; color: rgb(255, 255, 255); font-weight: bold; white-space: nowrap; transform: scale(0.25, 0.25); transform-origin: 0px 0px; -webkit-text-stroke: 1.5px rgb(255, 255, 255); text-shadow: rgba(0, 0, 40, 0.6) 0px 0px 6px; letter-spacing: -0.06px;">务领域改革发展的重点</div><div class="abs" style="left:50.8px;top:59.5px;width:46.8px;height:9.7px;background:linear-gradient(180deg,#fff,#c8d0e0);clip-path:polygon(4% 0,96% 0,100% 100%,0 100%);"></div><div class="abs" style="left: 58px; top: 61.54px; width: 128px; height: 22.9px; font-size: 20.8px; line-height: 22.9px; color: rgb(26, 42, 106); font-weight: bold; white-space: nowrap; transform: scale(0.25, 0.25); transform-origin: 0px 0px; letter-spacing: 0.64px;">何文炯教授讲</div><div class="abs" style="left:-20.0px;top:72.0px;width:190.0px;height:20.0px;background:transparent;border-radius:50%;border-top:2px solid rgba(140,200,255,.75);filter:blur(.5px);"></div><div class="abs" style="left:-20.0px;top:76.0px;width:190.0px;height:20.0px;background:transparent;border-radius:50%;border-top:1.5px solid rgba(120,180,255,.5);filter:blur(.5px);"></div><div class="abs" style="left:-10.0px;top:66.0px;width:170.0px;height:30.0px;background:radial-gradient(ellipse 70% 40% at 50% 60%, rgba(60,130,255,.45), rgba(60,130,255,0) 100%);"></div><div class="abs" style="left:132.0px;top:56.0px;width:8.0px;height:8.0px;border-radius:50%;background:rgba(220,230,255,.6);filter:blur(1.5px);"></div><div class="ov"></div><div class="lab">老年社会工作</div></div><div class="cap">何文炯教授讲座："十四五"时期养...</div></div>
<div class="card" style="left:219.3px;top:434.0px"><div class="img" style="background:#d8ece6"><div class="abs" style="left:0.0px;top:0.0px;width:147.0px;height:92.0px;background:linear-gradient(180deg,#eef6f4 0%,#e2f0ec 35%,#d4e8e2 55%,#c8e0da 66%,#b8ccc8 72%,#aabeba 85%,#9cb0aa 100%);"></div><div class="abs" style="left:0.0px;top:40.0px;width:146.5px;height:25.0px;background:radial-gradient(ellipse 50% 45% at 75% 70%, rgba(170,200,192,.6), rgba(170,200,192,0) 100%);"></div><div class="abs" style="left:-20.0px;top:74.0px;width:120.0px;height:30.0px;background:radial-gradient(ellipse 50% 60% at 40% 100%, rgba(50,80,60,.6), rgba(50,80,60,0) 100%);"></div><div class="abs" style="left:0.0px;top:62.0px;width:3.0px;height:16.0px;background:rgba(90,100,110,.6);"></div><div class="abs" style="left:6.3px;top:1.6px;width:10.4px;height:10.4px;border-radius:50%;background:#3aa050;"></div><div class="abs" style="left:8.3px;top:3.6px;width:6.4px;height:6.4px;border-radius:50%;background:#f0e070;"></div><div class="abs" style="left: 34px; top: 4.43px; width: 342.8px; height: 18.9px; font-size: 17.2px; line-height: 18.9px; color: rgb(51, 51, 51); white-space: nowrap; transform: scale(0.25, 0.25); transform-origin: 0px 0px; letter-spacing: 3.3px;">“五社联动”社会工作理论与实务研讨会</div><div class="abs" style="left: 39.8px; top: 18.44px; width: 296.4px; height: 31.7px; font-size: 28.8px; line-height: 31.7px; color: rgb(34, 34, 34); font-weight: bold; white-space: nowrap; transform: scale(0.25, 0.25); transform-origin: 0px 0px; -webkit-text-stroke: 1.2px rgb(34, 34, 34); letter-spacing: 4.17px;">创新“五社联动”机制</div><div class="abs" style="left: 29.1px; top: 34.04px; width: 382px; height: 31.7px; font-size: 28.8px; line-height: 31.7px; color: rgb(34, 34, 34); font-weight: bold; white-space: nowrap; transform: scale(0.25, 0.25); transform-origin: 0px 0px; -webkit-text-stroke: 1.2px rgb(34, 34, 34); letter-spacing: 0.64px;">助力基层社会治理和乡村振兴</div><div class="abs" style="left:40.8px;top:53.6px;width:72.1px;height:6.9px;background:#a8dcc6;border-radius:3.5px;"></div><div class="abs" style="left: 60px; top: 54.69px; width: 136px; height: 18.5px; font-size: 16.8px; line-height: 18.5px; color: rgb(51, 51, 85); white-space: nowrap; transform: scale(0.25, 0.25); transform-origin: 0px 0px; letter-spacing: 2.26px;">2021年9月25日</div><div class="abs" style="left: 68px; top: 69.22px; width: 80px; height: 15.8px; font-size: 14.4px; line-height: 15.8px; color: rgb(17, 17, 17); font-weight: bold; white-space: nowrap; transform: scale(0.25, 0.25); transform-origin: 0px 0px; letter-spacing: 4.41px;">湖北·武汉</div><div class="abs" style="left:129.0px;top:58.6px;width:10.0px;height:4.2px;background:#9a5a42;"></div><div class="abs" style="left:127.5px;top:64.1px;width:13.0px;height:4.2px;background:#9a5a42;"></div><div class="abs" style="left:126.0px;top:69.6px;width:16.0px;height:4.2px;background:#9a5a42;"></div><div class="abs" style="left:124.5px;top:75.1px;width:19.0px;height:4.2px;background:#9a5a42;"></div><div class="abs" style="left:123.0px;top:80.6px;width:22.0px;height:4.2px;background:#9a5a42;"></div><div class="abs" style="left:127.0px;top:57.0px;width:14.0px;height:2.4px;background:#2e2420;clip-path:polygon(0 100%,12% 20%,88% 20%,100% 100%);"></div><div class="abs" style="left:125.5px;top:62.5px;width:17.0px;height:2.4px;background:#2e2420;clip-path:polygon(0 100%,12% 20%,88% 20%,100% 100%);"></div><div class="abs" style="left:124.0px;top:68.0px;width:20.0px;height:2.4px;background:#2e2420;clip-path:polygon(0 100%,12% 20%,88% 20%,100% 100%);"></div><div class="abs" style="left:122.5px;top:73.5px;width:23.0px;height:2.4px;background:#2e2420;clip-path:polygon(0 100%,12% 20%,88% 20%,100% 100%);"></div><div class="abs" style="left:121.0px;top:79.0px;width:26.0px;height:2.4px;background:#2e2420;clip-path:polygon(0 100%,12% 20%,88% 20%,100% 100%);"></div><div class="abs" style="left:131.5px;top:52.5px;width:5.0px;height:4.8px;background:#2e2420;clip-path:polygon(50% 0,100% 100%,0 100%);"></div><div class="abs" style="left:119.0px;top:84.0px;width:30.0px;height:4.0px;background:#5a4a40;"></div><div class="ov"></div><div class="lab">社区社会工作</div></div><div class="cap">"五社联动"社会工作理论与实务研...</div></div>
<div class="card" style="left:390.9px;top:434.0px"><div class="img" style="background:#b0101a"><div class="abs" style="left:0.0px;top:0.0px;width:147.0px;height:92.0px;background:linear-gradient(180deg,#c01420 0%,#b2101c 40%,#a20e18 62%,#8e1a1a 78%,#7a3020 100%);"></div><div class="abs" style="left:30.0px;top:5.0px;width:170.0px;height:70.0px;background:transparent;border-radius:50%;border-top:2px solid rgba(255,110,110,.3);transform:rotate(-18deg);filter:blur(.6px);"></div><div class="abs" style="left:20.0px;top:15.0px;width:170.0px;height:70.0px;background:transparent;border-radius:50%;border-top:1.5px solid rgba(255,110,110,.2);transform:rotate(-14deg);filter:blur(.6px);"></div><div class="abs" style="left:0.0px;top:20.0px;width:120.0px;height:40.0px;background:radial-gradient(ellipse at 30% 50%, rgba(90,0,10,.3), rgba(90,0,10,0) 70%);"></div><div class="abs" style="left: 11.9px; top: 24.34px; width: 495.2px; height: 18.9px; font-size: 17.2px; line-height: 18.9px; color: rgb(255, 255, 255); font-weight: bold; white-space: nowrap; transform: scale(0.25, 0.25); transform-origin: 0px 0px; letter-spacing: 0.6px;">中国社会工作教育协会反贫困社会工作专业委员会 2019 年会暨</div><div class="abs" style="left: 25.6px; top: 35.63px; width: 389.6px; height: 18.9px; font-size: 17.2px; line-height: 18.9px; color: rgb(255, 255, 255); font-weight: bold; white-space: nowrap; transform: scale(0.25, 0.25); transform-origin: 0px 0px; letter-spacing: 1.35px;">“第二届社会工作教育参与脱贫攻坚学术研讨会”</div><div class="abs" style="left:0.0px;top:64.0px;width:146.5px;height:27.5px;background:linear-gradient(180deg,rgba(200,150,100,0),rgba(210,170,120,.55));"></div><div class="abs" style="left:0.0px;top:69.5px;width:4.0px;height:22.0px;background:linear-gradient(180deg,rgba(225,190,140,.7),rgba(200,160,110,.35));"></div><div class="abs" style="left:5.0px;top:73.5px;width:3.0px;height:18.0px;background:linear-gradient(180deg,rgba(225,190,140,.7),rgba(200,160,110,.35));"></div><div class="abs" style="left:13.0px;top:61.5px;width:3.0px;height:30.0px;background:linear-gradient(180deg,rgba(225,190,140,.7),rgba(200,160,110,.35));"></div><div class="abs" style="left:16.5px;top:51.5px;width:1.0px;height:40.0px;background:linear-gradient(180deg,rgba(225,190,140,.7),rgba(200,160,110,.35));"></div><div class="abs" style="left:21.0px;top:71.5px;width:4.0px;height:20.0px;background:linear-gradient(180deg,rgba(225,190,140,.7),rgba(200,160,110,.35));"></div><div class="abs" style="left:27.0px;top:76.5px;width:3.0px;height:15.0px;background:linear-gradient(180deg,rgba(225,190,140,.7),rgba(200,160,110,.35));"></div><div class="abs" style="left:33.0px;top:67.5px;width:4.0px;height:24.0px;background:linear-gradient(180deg,rgba(225,190,140,.7),rgba(200,160,110,.35));"></div><div class="abs" style="left:40.0px;top:77.5px;width:3.0px;height:14.0px;background:linear-gradient(180deg,rgba(225,190,140,.7),rgba(200,160,110,.35));"></div><div class="abs" style="left:47.0px;top:73.5px;width:4.0px;height:18.0px;background:linear-gradient(180deg,rgba(225,190,140,.7),rgba(200,160,110,.35));"></div><div class="abs" style="left:55.0px;top:75.5px;width:3.0px;height:16.0px;background:linear-gradient(180deg,rgba(225,190,140,.7),rgba(200,160,110,.35));"></div><div class="abs" style="left:63.0px;top:66.5px;width:4.0px;height:25.0px;background:linear-gradient(180deg,rgba(225,190,140,.7),rgba(200,160,110,.35));"></div><div class="abs" style="left:67.5px;top:55.5px;width:1.2px;height:36.0px;background:linear-gradient(180deg,rgba(225,190,140,.7),rgba(200,160,110,.35));"></div><div class="abs" style="left:72.0px;top:69.5px;width:4.0px;height:22.0px;background:linear-gradient(180deg,rgba(225,190,140,.7),rgba(200,160,110,.35));"></div><div class="abs" style="left:78.0px;top:75.5px;width:3.0px;height:16.0px;background:linear-gradient(180deg,rgba(225,190,140,.7),rgba(200,160,110,.35));"></div><div class="abs" style="left:86.0px;top:73.5px;width:3.0px;height:18.0px;background:linear-gradient(180deg,rgba(225,190,140,.7),rgba(200,160,110,.35));"></div><div class="abs" style="left:91.5px;top:51.5px;width:1.0px;height:40.0px;background:linear-gradient(180deg,rgba(225,190,140,.7),rgba(200,160,110,.35));"></div><div class="abs" style="left:91.0px;top:83.5px;width:3.0px;height:8.0px;background:linear-gradient(180deg,rgba(225,190,140,.7),rgba(200,160,110,.35));"></div><div class="abs" style="left:96.0px;top:77.5px;width:4.0px;height:14.0px;background:linear-gradient(180deg,rgba(225,190,140,.7),rgba(200,160,110,.35));"></div><div class="abs" style="left:103.0px;top:73.5px;width:3.0px;height:18.0px;background:linear-gradient(180deg,rgba(225,190,140,.7),rgba(200,160,110,.35));"></div><div class="abs" style="left:110.0px;top:71.5px;width:4.0px;height:20.0px;background:linear-gradient(180deg,rgba(225,190,140,.7),rgba(200,160,110,.35));"></div><div class="abs" style="left:117.0px;top:77.5px;width:3.0px;height:14.0px;background:linear-gradient(180deg,rgba(225,190,140,.7),rgba(200,160,110,.35));"></div><div class="abs" style="left:122.0px;top:73.5px;width:4.0px;height:18.0px;background:linear-gradient(180deg,rgba(225,190,140,.7),rgba(200,160,110,.35));"></div><div class="abs" style="left:129.0px;top:65.5px;width:3.0px;height:26.0px;background:linear-gradient(180deg,rgba(225,190,140,.7),rgba(200,160,110,.35));"></div><div class="abs" style="left:135.0px;top:71.5px;width:4.0px;height:20.0px;background:linear-gradient(180deg,rgba(225,190,140,.7),rgba(200,160,110,.35));"></div><div class="abs" style="left:141.0px;top:63.5px;width:4.0px;height:28.0px;background:linear-gradient(180deg,rgba(225,190,140,.7),rgba(200,160,110,.35));"></div><div class="abs" style="left:90.4px;top:61.2px;width:3.6px;height:3.6px;border-radius:50%;background:rgba(225,190,140,.8);"></div><div class="ov"></div><div class="lab">扶贫社会工作</div></div><div class="cap">第二届社会工作教育参与脱贫攻坚...</div></div>
<div class="card" style="left:562.6px;top:434.0px"><div class="img" style="background:#1a98d8"><div class="abs" style="left:0.0px;top:0.0px;width:147.0px;height:92.0px;background:#26b4d4;"></div><div class="abs" style="left:0.0px;top:0.0px;width:146.5px;height:9.5px;background:#1c9ccc;"></div><div class="abs" style="left:0.0px;top:9.2px;width:146.5px;height:62.0px;background:linear-gradient(90deg,#8c40e2 0%,#6c50e0 35%,#3c80da 70%,#2c94da 100%);"></div><div class="abs" style="left:-6.0px;top:29.0px;width:12.0px;height:12.0px;border-radius:50%;background:#ff4a7a;"></div><div class="abs" style="left:5.2px;top:48.9px;width:5.2px;height:5.2px;border-radius:50%;background:#ff8a30;"></div><div class="abs" style="left:143.0px;top:20.0px;width:6.0px;height:6.0px;border-radius:50%;background:#ff6aa0;"></div><div class="abs" style="left: 21px; top: 28.04px; width: 454px; height: 45.3px; font-size: 41.2px; line-height: 45.3px; color: rgb(255, 255, 255); white-space: nowrap; transform: scale(0.25, 0.25); transform-origin: 0px 0px; -webkit-text-stroke: 1.2px rgb(255, 255, 255); letter-spacing: 0.09px;">社会工作教育与课程发展</div><div class="abs" style="left: 35.6px; top: 48.46px; width: 331.6px; height: 26px; font-size: 23.6px; line-height: 26px; color: rgba(255, 255, 255, 0.85); white-space: nowrap; transform: scale(0.25, 0.25); transform-origin: 0px 0px; letter-spacing: 14.87px;">国际经验与本土探索</div><div class="abs" style="left:0.0px;top:69.0px;width:146.5px;height:23.0px;background:#28b8d6;"></div><div class="abs" style="left:7.0px;top:70.0px;width:22.0px;height:8.0px;background:#d07048;border-radius:0 0 50% 50%;"></div><div class="abs" style="left:44.0px;top:70.0px;width:16.0px;height:5.0px;background:#2a9ac0;border-radius:0 0 50% 50%;"></div><div class="abs" style="left:66.0px;top:70.0px;width:20.0px;height:8.0px;background:#e88a30;border-radius:0 0 50% 50%;"></div><div class="abs" style="left:93.0px;top:70.0px;width:22.0px;height:8.0px;background:#2a5a98;border-radius:0 0 50% 50%;"></div><div class="abs" style="left:121.0px;top:70.0px;width:18.0px;height:6.0px;background:#1e88b0;border-radius:0 0 50% 50%;"></div><div class="abs" style="left:0.0px;top:66.5px;width:146.5px;height:5.0px;background:transparent;background:radial-gradient(circle at 50% 100%, #5ae0f4 0 3.2px, transparent 3.4px) 0 0/15px 5px;"></div><div class="abs" style="left:0.0px;top:70.2px;width:146.5px;height:1.2px;background:#5ae0f4;"></div><div class="ov"></div><div class="lab">社会工作年会</div></div><div class="cap">社会工作教育与课程发展：国际经...</div></div>
</body></html>
